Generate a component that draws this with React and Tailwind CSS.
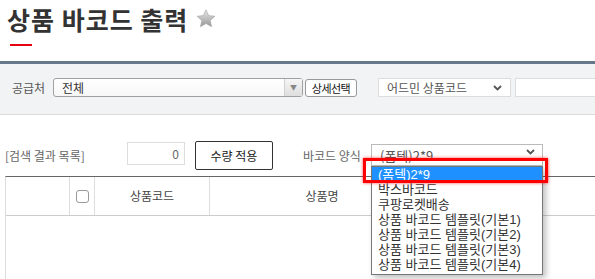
const KR = "font-['Noto_Sans_CJK_KR',sans-serif]";
const LIST_FONT = "font-['Liberation_Sans','Noto_Sans_CJK_KR',sans-serif]";

const BARCODE_TYPES = [
  '(폼텍)2*9',
  '박스바코드',
  '쿠팡로켓배송',
  '상품 바코드 템플릿(기본1)',
  '상품 바코드 템플릿(기본2)',
  '상품 바코드 템플릿(기본3)',
  '상품 바코드 템플릿(기본4)',
];

function Star() {
  return (
    <svg width="20" height="19" viewBox="0 0 24 23" className="ml-[8px] mt-[7px] shrink-0">
      <defs>
        <linearGradient id="starg" x1="0" y1="0" x2="0" y2="1">
          <stop offset="0" stopColor="#e8e8e8" />
          <stop offset="1" stopColor="#979797" />
        </linearGradient>
      </defs>
      <path
        d="M12 1l3.2 7 7.6.8-5.7 5.1 1.6 7.5L12 17.6l-6.7 3.8 1.6-7.5L1.2 8.8 8.8 8z"
        fill="url(#starg)"
        stroke="#a8a8a8"
        strokeWidth="0.8"
      />
    </svg>
  );
}

function Chevron() {
  return (
    <svg width="9" height="6" viewBox="0 0 9 6" className="shrink-0">
      <path d="M1 1l3.5 3.5L8 1" fill="none" stroke="#555" strokeWidth="1.8" />
    </svg>
  );
}

function BarcodeSelect() {
  return (
    <div className="relative">
      <div className="flex h-[22px] w-[172px] justify-between border border-[#bbb] bg-white pl-[8px] pr-[7px] pt-[4px] text-[13px] leading-[14px] text-[#555]">
        <span>(폼텍)2*9</span>
        <Chevron />
      </div>
      <ul className={`${LIST_FONT} absolute left-0 top-[22px] z-10 w-[172px] border border-[#777] bg-white pb-[2px] shadow-[3px_3px_6px_rgba(0,0,0,0.25)]`}>
        {BARCODE_TYPES.map((t, i) => (
          <li
            key={t}
            className={
              i === 0
                ? 'h-[15px] bg-[#1e90ff] pl-[6px] text-[13px] leading-[15px] text-white'
                : 'h-[15px] pl-[6px] text-[13px] leading-[15px] text-[#333]'
            }
          >
            {t}
          </li>
        ))}
      </ul>
      <div className="pointer-events-none absolute left-[-8px] top-[14px] z-20 h-[25px] w-[185px] border-[3px] border-[#ff0000] shadow-[0_0_3px_rgba(255,0,0,0.7)]" />
    </div>
  );
}

export default function App() {
  return (
    <div className={`${KR} h-[279px] w-[595px] overflow-hidden bg-white`}>
      <div className="flex items-start pl-[7px] pt-[2px]">
        <h1 className="text-[25px] font-bold leading-[34px] tracking-[1px] text-[#333]">상품 바코드 출력</h1>
        <Star />
      </div>
      <div className="ml-[10px] mt-[8px] h-[2px] w-[22px] bg-[#e60012]" />

      <div className="mt-[15px] border-t-[3px] border-b border-t-[#66778a] border-b-[#dcdcdc] bg-[#f1f3f4] pt-[14px] pb-[17px]">
        <div className="flex h-[19px] items-center pl-[12px] text-[12px]">
          <span className="w-[41px] shrink-0 text-[#555]">공급처</span>
          <div className="flex h-[19px] w-[250px] shrink-0 items-center rounded-[3px] border border-[#a0a0a0] bg-gradient-to-b from-white to-[#f7f7f7]">
            <span className="flex-1 pl-[8px] text-[#333]">전체</span>
            <span className="flex h-full w-[18px] items-center justify-center border-l border-[#d0d0d0] bg-gradient-to-b from-[#f6f6f6] to-[#dedede] text-[7px] text-[#888]">
              ▼
            </span>
          </div>
          <button className="ml-[2px] h-[18px] w-[52px] shrink-0 rounded-[3px] border border-[#999] bg-white text-[11px] tracking-[-0.05em] text-[#111]">
            상세선택
          </button>
          <div className="ml-[21px] flex h-[19px] w-[133px] shrink-0 items-center justify-between border border-[#ddd] bg-white pl-[8px] pr-[8px] text-[#555]">
            <span>어드민 상품코드</span>
            <Chevron />
          </div>
          <div className="ml-[4px] h-[19px] w-[100px] shrink-0 border border-[#ddd] bg-white" />
        </div>
      </div>

      <div className="mt-[26px] flex items-start pl-[5px] text-[12px]">
        <span className="mt-[6px] w-[122px] shrink-0 text-[#666]">[검색 결과 목록]</span>
        <div className="mt-[1px] flex h-[23px] w-[58px] shrink-0 items-center justify-end border border-[#ddd] bg-white pr-[5px] text-[#666]">
          0
        </div>
        <button className="ml-[10px] h-[29px] w-[78px] shrink-0 rounded-[2px] border border-[#333] bg-white text-[12px] text-[#222]">
          수량 적용
        </button>
        <span className="ml-[30px] mt-[6px] w-[68px] shrink-0 text-[#666]">바코드 양식</span>
        <div className="mt-[3px] shrink-0">
          <BarcodeSelect />
        </div>
      </div>

      <div className="ml-[5px] mt-[6px] h-[200px] border-l border-t border-l-[#ddd] border-t-[#666]">
        <div className="grid h-[39px] grid-cols-[64px_25px_115px_225px_60px_1fr] border-b border-[#ccc] text-[12px] text-[#444]">
          <div className="border-r border-[#ddd]" />
          <div className="flex items-center justify-center border-r border-[#ddd]">
            <span className="h-[13px] w-[13px] rounded-[3px] border border-[#999] bg-white" />
          </div>
          <div className="flex items-center justify-center border-r border-[#ddd]">상품코드</div>
          <div className="flex items-center justify-center border-r border-[#ddd]">상품명</div>
          <div className="border-r border-[#ddd]" />
          <div className="flex items-center justify-center pr-[50px]">옵션</div>
        </div>
      </div>
    </div>
  );
}
